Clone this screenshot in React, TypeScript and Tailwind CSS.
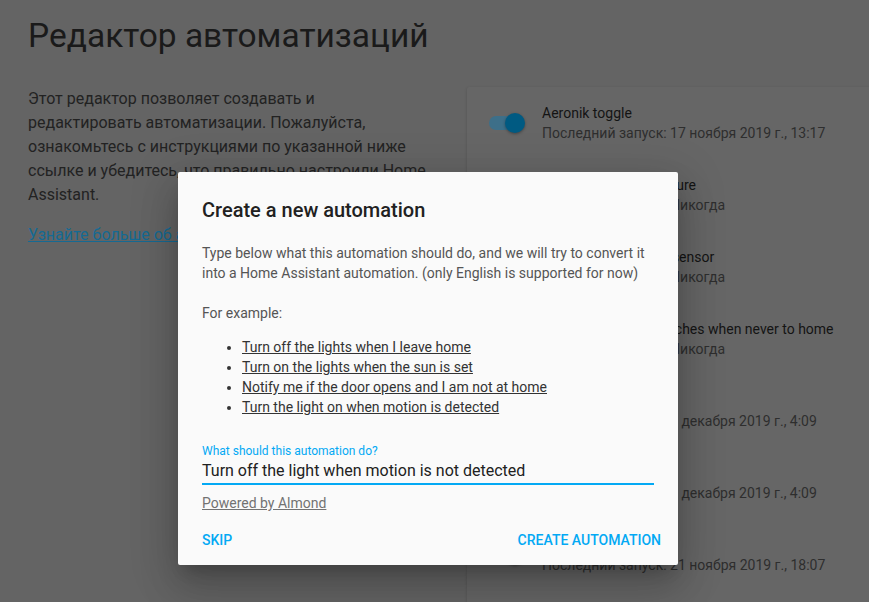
const automations = [
  { name: "Aeronik toggle", lastRun: "Последний запуск: 17 ноября 2019 г., 13:17" },
  { name: "Notify if low temperature", lastRun: "Последний запуск: Никогда" },
  { name: "Kitchen temperature sensor", lastRun: "Последний запуск: Никогда" },
  { name: "Turn off TVs and switches when never to home", lastRun: "Последний запуск: Никогда" },
  { name: "Morning lights", lastRun: "Последний запуск: 1 декабря 2019 г., 4:09" },
  { name: "Evening lights", lastRun: "Последний запуск: 1 декабря 2019 г., 4:09" },
  { name: "Hallway light", lastRun: "Последний запуск: 21 ноября 2019 г., 18:07" },
];

const examples = [
  "Turn off the lights when I leave home",
  "Turn on the lights when the sun is set",
  "Notify me if the door opens and I am not at home",
  "Turn the light on when motion is detected",
];

function Toggle() {
  return (
    <div className="relative h-[14px] w-[34px] rounded-full bg-[#3d6f89]">
      <div className="absolute -right-[2px] -top-[3px] size-[20px] rounded-full bg-[#005a82] shadow-[0_1px_3px_rgba(0,0,0,0.35)]" />
    </div>
  );
}

function AutomationRow({ name, lastRun }: { name: string; lastRun: string }) {
  return (
    <div className="flex h-[72px] items-center">
      <div className="ml-[22px] w-[53px] shrink-0">
        <Toggle />
      </div>
      <div className="min-w-0">
        <p className="whitespace-nowrap text-[14px] leading-[20px] text-[#141414]">{name}</p>
        <p className="whitespace-nowrap text-[14px] leading-[20px] text-[#2e2e2e]">{lastRun}</p>
      </div>
    </div>
  );
}

export default function App() {
  return (
    <div className="relative h-[602px] w-[869px] overflow-hidden bg-[#646464] font-['Roboto',sans-serif]">
      <h1 className="pl-[28px] pt-4 text-[33.5px] leading-[40px] font-normal text-[#1a1a1a]">
        Редактор автоматизаций
      </h1>

      <div className="mt-[31px] flex">
        <div className="ml-[28px] w-[400px] shrink-0">
          <p className="text-[16px] leading-[24px] text-[#222]">
            Этот редактор позволяет создавать и редактировать автоматизации. Пожалуйста,
            ознакомьтесь с инструкциями по указанной ниже ссылке и убедитесь, что правильно
            настроили Home Assistant.
          </p>
          <p className="mt-4 text-[16px] leading-[24px]">
            <a className="text-[#156a93] underline">Узнайте больше об автоматизациях</a>
          </p>
        </div>

        <div className="ml-[39px] w-[440px] shrink-0 rounded-[2px] bg-[#666] pb-[40px] shadow-[0_1px_3px_rgba(0,0,0,0.18)]">
          {automations.map((a) => (
            <AutomationRow key={a.name} name={a.name} lastRun={a.lastRun} />
          ))}
        </div>
      </div>

      {/* dialog */}
      <div className="absolute left-[178px] top-[172px] w-[500px] rounded-[2px] bg-[#fafafa] shadow-[0_11px_15px_-7px_rgba(0,0,0,0.2),0_24px_38px_3px_rgba(0,0,0,0.14),0_9px_46px_8px_rgba(0,0,0,0.12)]">
        <div className="px-6 pt-[26px]">
          <h2 className="text-[20px] leading-[24px] font-medium text-[#212121]">
            Create a new automation
          </h2>
          <p className="mt-[21px] text-[14px] leading-[20px] text-[#555]">
            Type below what this automation should do, and we will try to convert it into a
            Home Assistant automation. (only English is supported for now)
          </p>
          <p className="mt-[20px] text-[14px] leading-[20px] text-[#555]">For example:</p>
          <ul className="mt-[14px] list-disc pl-[40px] text-[14px] leading-[20px] text-[#333]">
            {examples.map((e) => (
              <li key={e}>
                <a className="underline">{e}</a>
              </li>
            ))}
          </ul>

          <div className="mt-[26px]">
            <p className="text-[12px] leading-[16px] text-[#03a9f4]">
              What should this automation do?
            </p>
            <div className="border-b-2 border-[#03a9f4] text-[16px] leading-[24px] text-[#212121]">
              Turn off the light when motion is not detected
            </div>
          </div>

          <p className="mt-[8px] text-[14px] leading-[20px] text-[#727272]">
            <a className="underline">Powered by Almond</a>
          </p>
        </div>

        <div className="mt-[9px] flex items-center justify-between pb-[7px] pl-[16px] pr-[9px]">
          <button className="h-9 px-2 text-[14px] font-medium uppercase tracking-normal text-[#03a9f4]">
            Skip
          </button>
          <button className="h-9 px-2 text-[14px] font-medium uppercase tracking-normal text-[#03a9f4]">
            Create automation
          </button>
        </div>
      </div>
    </div>
  );
}
